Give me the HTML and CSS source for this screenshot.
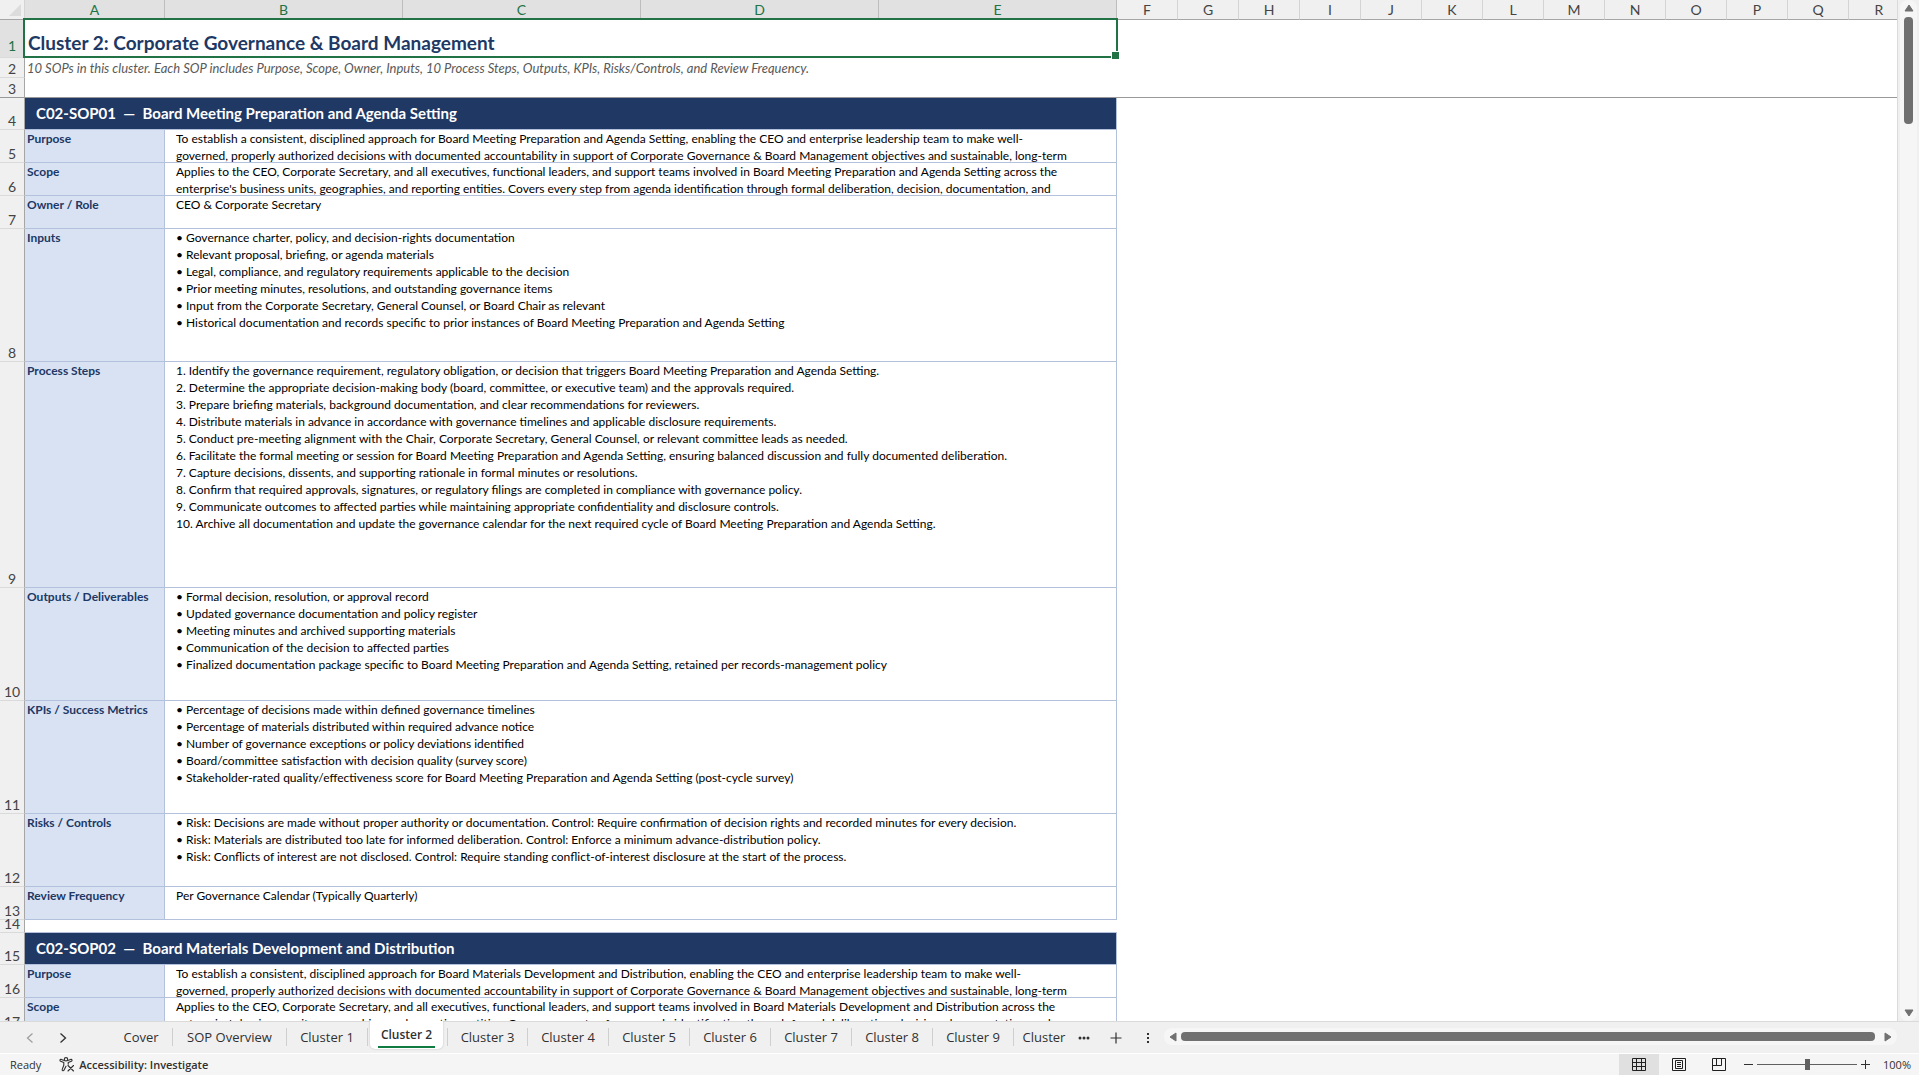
FILE: index.html
```html
<!DOCTYPE html>
<html lang="en">
  <head>
    <meta charset="utf-8"/>
    <title>Cluster 2: Corporate Governance &amp; Board Management</title>
    <link rel="stylesheet" href="styles.css">
  </head>
  <body>
    <div class="workspace">
      <div class="grid">
        <table class="sheet">
          <colgroup>
            <col class="col-head"><col class="col-label"><col class="col-wide" span="4"><col class="col-std" span="13">
          </colgroup>
          <thead>
            <tr class="letters">
              <th class="corner"><svg width="12" height="12" viewBox="0 0 12 12"><path d="M12 0v12H0z" fill="#dcdcdc"/></svg></th>
              <th class="sel">A</th><th class="sel">B</th><th class="sel">C</th><th class="sel">D</th><th class="sel">E</th>
              <th>F</th><th>G</th><th>H</th><th>I</th><th>J</th><th>K</th><th>L</th><th>M</th><th>N</th><th>O</th><th>P</th><th>Q</th><th>R</th>
            </tr>
          </thead>
          <tbody>
            <tr class="h38">
              <th class="num sel">1</th>
              <td colspan="5" class="title">Cluster 2: Corporate Governance &amp; Board Management<span class="selection"></span></td>
              <td colspan="13"></td>
            </tr>
            <tr class="h20">
              <th class="num">2</th>
              <td colspan="5" class="subtitle">10 SOPs in this cluster. Each SOP includes Purpose, Scope, Owner, Inputs, 10 Process Steps, Outputs, KPIs, Risks/Controls, and Review Frequency.</td>
              <td colspan="13"></td>
            </tr>
            <tr class="h20 freeze">
              <th class="num">3</th>
              <td colspan="18"></td>
            </tr>
            <tr class="h32">
              <th class="num">4</th>
              <td colspan="5" class="sop">C02-SOP01&nbsp; —&nbsp; Board Meeting Preparation and Agenda Setting</td>
            </tr>
            <tr class="h33">
              <th class="num">5</th>
              <td class="label">Purpose</td>
              <td colspan="4" class="text"><div class="clip">To establish a consistent, disciplined approach for Board Meeting Preparation and Agenda Setting, enabling the CEO and enterprise leadership team to make well-<br>governed, properly authorized decisions with documented accountability in support of Corporate Governance &amp; Board Management objectives and sustainable, long-term</div></td>
            </tr>
            <tr class="h33">
              <th class="num">6</th>
              <td class="label">Scope</td>
              <td colspan="4" class="text"><div class="clip">Applies to the CEO, Corporate Secretary, and all executives, functional leaders, and support teams involved in Board Meeting Preparation and Agenda Setting across the<br>enterprise's business units, geographies, and reporting entities. Covers every step from agenda identification through formal deliberation, decision, documentation, and</div></td>
            </tr>
            <tr class="h33">
              <th class="num">7</th>
              <td class="label">Owner / Role</td>
              <td colspan="4" class="text">CEO &amp; Corporate Secretary</td>
            </tr>
            <tr class="h133">
              <th class="num">8</th>
              <td class="label">Inputs</td>
              <td colspan="4" class="text">
                • Governance charter, policy, and decision-rights documentation<br>
                • Relevant proposal, briefing, or agenda materials<br>
                • Legal, compliance, and regulatory requirements applicable to the decision<br>
                • Prior meeting minutes, resolutions, and outstanding governance items<br>
                • Input from the Corporate Secretary, General Counsel, or Board Chair as relevant<br>
                • Historical documentation and records specific to prior instances of Board Meeting Preparation and Agenda Setting
              </td>
            </tr>
            <tr class="h226">
              <th class="num">9</th>
              <td class="label">Process Steps</td>
              <td colspan="4" class="text">
                1. Identify the governance requirement, regulatory obligation, or decision that triggers Board Meeting Preparation and Agenda Setting.<br>
                2. Determine the appropriate decision-making body (board, committee, or executive team) and the approvals required.<br>
                3. Prepare briefing materials, background documentation, and clear recommendations for reviewers.<br>
                4. Distribute materials in advance in accordance with governance timelines and applicable disclosure requirements.<br>
                5. Conduct pre-meeting alignment with the Chair, Corporate Secretary, General Counsel, or relevant committee leads as needed.<br>
                6. Facilitate the formal meeting or session for Board Meeting Preparation and Agenda Setting, ensuring balanced discussion and fully documented deliberation.<br>
                7. Capture decisions, dissents, and supporting rationale in formal minutes or resolutions.<br>
                8. Confirm that required approvals, signatures, or regulatory filings are completed in compliance with governance policy.<br>
                9. Communicate outcomes to affected parties while maintaining appropriate confidentiality and disclosure controls.<br>
                10. Archive all documentation and update the governance calendar for the next required cycle of Board Meeting Preparation and Agenda Setting.
              </td>
            </tr>
            <tr class="h113">
              <th class="num">10</th>
              <td class="label">Outputs / Deliverables</td>
              <td colspan="4" class="text">
                • Formal decision, resolution, or approval record<br>
                • Updated governance documentation and policy register<br>
                • Meeting minutes and archived supporting materials<br>
                • Communication of the decision to affected parties<br>
                • Finalized documentation package specific to Board Meeting Preparation and Agenda Setting, retained per records-management policy
              </td>
            </tr>
            <tr class="h113">
              <th class="num">11</th>
              <td class="label">KPIs / Success Metrics</td>
              <td colspan="4" class="text">
                • Percentage of decisions made within defined governance timelines<br>
                • Percentage of materials distributed within required advance notice<br>
                • Number of governance exceptions or policy deviations identified<br>
                • Board/committee satisfaction with decision quality (survey score)<br>
                • Stakeholder-rated quality/effectiveness score for Board Meeting Preparation and Agenda Setting (post-cycle survey)
              </td>
            </tr>
            <tr class="h73">
              <th class="num">12</th>
              <td class="label">Risks / Controls</td>
              <td colspan="4" class="text">
                • Risk: Decisions are made without proper authority or documentation. Control: Require confirmation of decision rights and recorded minutes for every decision.<br>
                • Risk: Materials are distributed too late for informed deliberation. Control: Enforce a minimum advance-distribution policy.<br>
                • Risk: Conflicts of interest are not disclosed. Control: Require standing conflict-of-interest disclosure at the start of the process.
              </td>
            </tr>
            <tr class="h33">
              <th class="num">13</th>
              <td class="label">Review Frequency</td>
              <td colspan="4" class="text">Per Governance Calendar (Typically Quarterly)</td>
            </tr>
            <tr class="h13">
              <th class="num">14</th>
              <td colspan="5" class="gap"></td>
            </tr>
            <tr class="h32">
              <th class="num">15</th>
              <td colspan="5" class="sop">C02-SOP02&nbsp; —&nbsp; Board Materials Development and Distribution</td>
            </tr>
            <tr class="h33">
              <th class="num">16</th>
              <td class="label">Purpose</td>
              <td colspan="4" class="text"><div class="clip">To establish a consistent, disciplined approach for Board Materials Development and Distribution, enabling the CEO and enterprise leadership team to make well-<br>governed, properly authorized decisions with documented accountability in support of Corporate Governance &amp; Board Management objectives and sustainable, long-term</div></td>
            </tr>
            <tr class="h33">
              <th class="num">17</th>
              <td class="label">Scope</td>
              <td colspan="4" class="text"><div class="clip">Applies to the CEO, Corporate Secretary, and all executives, functional leaders, and support teams involved in Board Materials Development and Distribution across the<br>enterprise's business units, geographies, and reporting entities. Covers every step from agenda identification through formal deliberation, decision, documentation, and</div></td>
            </tr>
          </tbody>
        </table>
      </div>
      <div class="vscroll">
        <svg width="10" height="8" viewBox="0 0 10 8"><path d="M5 1l4 6H1z" fill="#707070" stroke="#707070" stroke-linejoin="round"/></svg>
        <div class="vthumb"></div>
        <svg class="down" width="10" height="8" viewBox="0 0 10 8"><path d="M5 7L1 1h8z" fill="#707070" stroke="#707070" stroke-linejoin="round"/></svg>
      </div>
    </div>

    <div class="tabbar">
      <div class="tabnav">
        <button aria-label="Previous sheet"><svg width="8" height="12" viewBox="0 0 8 12"><path d="M6.500 1.500L1.500 6l5 4.500" fill="none" stroke="#a0a0a0" stroke-width="1.300"/></svg></button>
        <button aria-label="Next sheet"><svg width="8" height="12" viewBox="0 0 8 12"><path d="M1.500 1.500L6.500 6l-5 4.500" fill="none" stroke="#303030" stroke-width="1.300"/></svg></button>
      </div>
      <div class="tabs">
        <button class="tab cover">Cover</button>
        <button class="tab overview">SOP Overview</button>
        <button class="tab">Cluster 1</button>
        <button class="tab active"><span>Cluster 2</span></button>
        <button class="tab">Cluster 3</button>
        <button class="tab">Cluster 4</button>
        <button class="tab">Cluster 5</button>
        <button class="tab">Cluster 6</button>
        <button class="tab">Cluster 7</button>
        <button class="tab">Cluster 8</button>
        <button class="tab">Cluster 9</button>
        <button class="tab last">Cluster</button>
      </div>
      <div class="tabtools">
        <button aria-label="More sheets"><svg width="12" height="4" viewBox="0 0 12 4"><g fill="#303030"><circle cx="2" cy="2" r="1.500"/><circle cx="6" cy="2" r="1.500"/><circle cx="10" cy="2" r="1.500"/></g></svg></button>
        <button aria-label="New sheet"><svg width="12" height="12" viewBox="0 0 12 12"><path d="M6 .5v11M.5 6h11" stroke="#303030" stroke-width="1.200"/></svg></button>
        <button class="resize" aria-label="Resize tabs"><svg width="4" height="12" viewBox="0 0 4 12"><path d="M1 1h2v2H1zM1 5h2v2H1zM1 9h2v2H1z" fill="#303030"/></svg></button>
      </div>
      <div class="hscroll">
        <svg width="8" height="10" viewBox="0 0 8 10"><path d="M1 5l6-4v8z" fill="#707070" stroke="#707070" stroke-linejoin="round"/></svg>
        <div class="hthumb"></div>
        <svg width="8" height="10" viewBox="0 0 8 10"><path d="M7 5L1 1v8z" fill="#707070" stroke="#707070" stroke-linejoin="round"/></svg>
      </div>
    </div>

    <div class="status">
      <span class="ready">Ready</span>
      <button class="access">
        <svg width="16" height="15" viewBox="0 0 16 15" fill="none" stroke="#303030" stroke-width="1.100" stroke-linejoin="round" stroke-linecap="round"><circle cx="7" cy="2.300" r="1.700"/><path d="M5.400 3.600L2.300 2.400C1 2 .4 3.600 1.600 4.200L4.800 5.600v2.600L3.200 12.400c-.4 1.400 1.300 1.900 1.900.7L7 9.300M8.600 3.600l3.100-1.200c1.300-.4 1.900 1.200.7 1.800L9.200 5.600v1.600M9 8.500l5.500 5.500M14.500 8.500L9 14"/></svg>
        <span>Accessibility: Investigate</span>
      </button>
      <div class="views">
        <button class="view on" aria-label="Normal"><svg width="14" height="13" viewBox="0 0 14 13" fill="none" stroke="#202020"><path d="M.5.5h13v12H.5zM.5 4.500h13M.5 8.500h13M4.500 .5v12M9.500.5v12"/></svg></button>
        <button class="view" aria-label="Page layout"><svg width="14" height="13" viewBox="0 0 14 13" fill="none" stroke="#202020"><path d="M.5.5h13v12H.5zM3.500 2.500h7v8h-7zM5 4.500h4M5 6.500h4M5 8.500h4"/></svg></button>
        <button class="view" aria-label="Page break preview"><svg width="14" height="13" viewBox="0 0 14 13" fill="none" stroke="#202020"><path d="M.5.5h13v12H.5zM.5 7.500h9v-7M4.500 .5v7"/></svg></button>
      </div>
      <button class="step" aria-label="Zoom out"><svg width="9" height="9" viewBox="0 0 9 9"><path d="M0 4.500h9" stroke="#303030"/></svg></button>
      <input class="zoom" type="range" min="0" max="100" value="50" aria-label="Zoom">
      <button class="step" aria-label="Zoom in"><svg width="9" height="9" viewBox="0 0 9 9"><path d="M0 4.500h9M4.500 0v9" stroke="#303030"/></svg></button>
      <span class="percent">100%</span>
    </div>
  </body>
</html>
```
FILE: styles.css
```css
* {
  box-sizing: border-box;
  margin: 0;
  padding: 0;
}

body {
  display: flex;
  flex-direction: column;
  height: 100vh;
  overflow: hidden;
  background: #f0f0f0;
  color: #303030;
  font-family: 'Open Sans', 'Noto Sans', sans-serif;
  font-size: 11px;
}

button {
  border: 0;
  background: none;
  color: inherit;
  font: inherit;
}

svg {
  display: block;
}

/* sheet */

.workspace {
  flex: 1;
  min-height: 0;
  display: flex;
}

.grid {
  flex: 1;
  min-width: 0;
  overflow: hidden;
  background: #fff;
  border-right: 1px solid #dadada;
}

.sheet {
  width: 1910px;
  table-layout: fixed;
  border-collapse: separate;
  border-spacing: 0;
  font-family: Lato, 'Open Sans', sans-serif;
  font-size: 12px;
  line-height: 17px;
  color: #000;
}

.col-head { width: 25px; }
.col-label { width: 140px; }
.col-wide { width: 238px; }
.col-std { width: 61px; }

.sheet th {
  background: #f0f0f0;
  color: #444;
  font-size: 14px;
  font-weight: normal;
  text-align: center;
}

.sheet .sel {
  background: #e1e1e1;
  color: #217346;
}

.letters th {
  height: 20px;
  padding-top: 1px;
  line-height: 18px;
  border-right: 1px solid #d4d4d4;
  border-bottom: 1px solid #a6a6a6;
}

.letters .sel {
  border-right-color: #bdbdbd;
}

.letters .corner {
  padding: 4px 3px 3px 9px;
}

.sheet .num {
  padding-bottom: 4px;
  line-height: 8px;
  vertical-align: bottom;
  border-right: 1px solid #a6a6a6;
  border-bottom: 1px solid #dadada;
}

.sheet .num.sel {
  padding-bottom: 7px;
}

.h13 { height: 13px; }
.h20 { height: 20px; }
.h32 { height: 32px; }
.h33 { height: 33px; }
.h38 { height: 38px; }
.h73 { height: 73px; }
.h113 { height: 113px; }
.h133 { height: 133px; }
.h226 { height: 226px; }

.sheet .freeze th,
.freeze td {
  border-bottom: 1px solid #999;
}

.title {
  position: relative;
  padding: 8px 0 0 3px;
  color: #203864;
  font-size: 19px;
  font-weight: bold;
  line-height: 28px;
}

.selection {
  position: absolute;
  top: -2px;
  right: -1px;
  bottom: 0;
  left: -2px;
  border: 2px solid #217346;
}

.selection::after {
  content: '';
  position: absolute;
  right: -4px;
  bottom: -4px;
  width: 7px;
  height: 7px;
  border: 1px solid #fff;
  background: #217346;
}

.subtitle {
  padding-left: 2px;
  color: #595959;
  font-size: 13px;
  font-style: italic;
}

.sop {
  padding-left: 11px;
  background: #203864;
  color: #fff;
  font-size: 15px;
  font-weight: bold;
  border-right: 1px solid #b4c1dc;
  border-bottom: 1px solid #b4c1dc;
}

.label {
  padding-left: 2px;
  vertical-align: top;
  background: #d9e2f3;
  color: #203864;
  font-weight: bold;
  border-right: 1px solid #b4c1dc;
  border-bottom: 1px solid #b4c1dc;
}

.text {
  padding-left: 11px;
  vertical-align: top;
  white-space: nowrap;
  border-right: 1px solid #b4c1dc;
  border-bottom: 1px solid #b4c1dc;
}

.clip {
  height: 32px;
  overflow: hidden;
}

.gap {
  border-bottom: 1px solid #b4c1dc;
}

/* scroll bars */

.vscroll {
  display: flex;
  flex-direction: column;
  align-items: center;
  width: 17px;
  margin: 0 2px 0 2px;
  padding: 4px 0;
  background: #f6f6f6;
  border-radius: 8px;
}

.vthumb {
  width: 9px;
  height: 107px;
  margin-top: 5px;
  background: #707070;
  border-radius: 4px;
}

.down {
  margin-top: auto;
}

.hscroll {
  flex: 1;
  display: flex;
  align-items: center;
  gap: 4px;
  height: 17px;
  margin: 6px 22px 0 0;
  padding: 0 5px;
  background: #f6f6f6;
  border-radius: 8px;
}

.hthumb {
  flex: 1;
  height: 9px;
  margin-right: 5px;
  background: #707070;
  border-radius: 4px;
}

/* sheet tabs */

.tabbar {
  display: flex;
  height: 33px;
  border-top: 1px solid #dadada;
  border-bottom: 1px solid #fff;
}

.tabnav {
  display: flex;
  align-items: center;
  gap: 25px;
  width: 110px;
  padding-left: 26px;
}

.tabs {
  display: flex;
  font-size: 13px;
}

.tab {
  width: 81px;
  height: 18px;
  margin-top: 6px;
  line-height: 18px;
  border-right: 1px solid #cfcfcf;
}

.cover { width: 63px; }
.overview { width: 114px; }

.active {
  width: 73px;
  height: 28px;
  margin: -1px 4px 0 2px;
  padding-top: 3px;
  background: #fff;
  border-right: 0;
  border-radius: 0 0 5px 5px;
  box-shadow: 0 0 2px #bbb;
  clip-path: inset(0 -3px -3px -3px);
  font-weight: 600;
  font-size: 12px;
}

.active span {
  display: block;
  height: 23px;
  margin: 0 8px;
  line-height: 20px;
  border-bottom: 2px solid #107c41;
}

.active + .tab {
  border-left: 1px solid #cfcfcf;
}

.last {
  width: 60px;
  border-right: 0;
}

.tabtools {
  display: flex;
  align-items: center;
  gap: 20px;
  padding: 0 14px 0 4px;
}

.resize {
  margin-left: 4px;
}

/* status bar */

.status {
  display: flex;
  align-items: center;
  height: 21px;
  padding: 0 8px 0 10px;
  background: #f5f5f5;
}

.access {
  display: flex;
  align-items: center;
  gap: 4px;
  margin: 0 auto 0 18px;
  font-weight: 600;
}

.views {
  display: flex;
  margin-right: 5px;
}

.view {
  width: 40px;
  height: 21px;
  padding-left: 13px;
}

.on {
  background: #e0e0e0;
}

.zoom {
  appearance: none;
  width: 100px;
  height: 11px;
  margin: 0 4px;
  background: linear-gradient(#606060, #606060) center / 100% 1px no-repeat;
}

.zoom::-webkit-slider-thumb {
  appearance: none;
  width: 5px;
  height: 11px;
  background: #606060;
}

.percent {
  width: 28px;
  margin-left: 13px;
  text-align: right;
}
```
